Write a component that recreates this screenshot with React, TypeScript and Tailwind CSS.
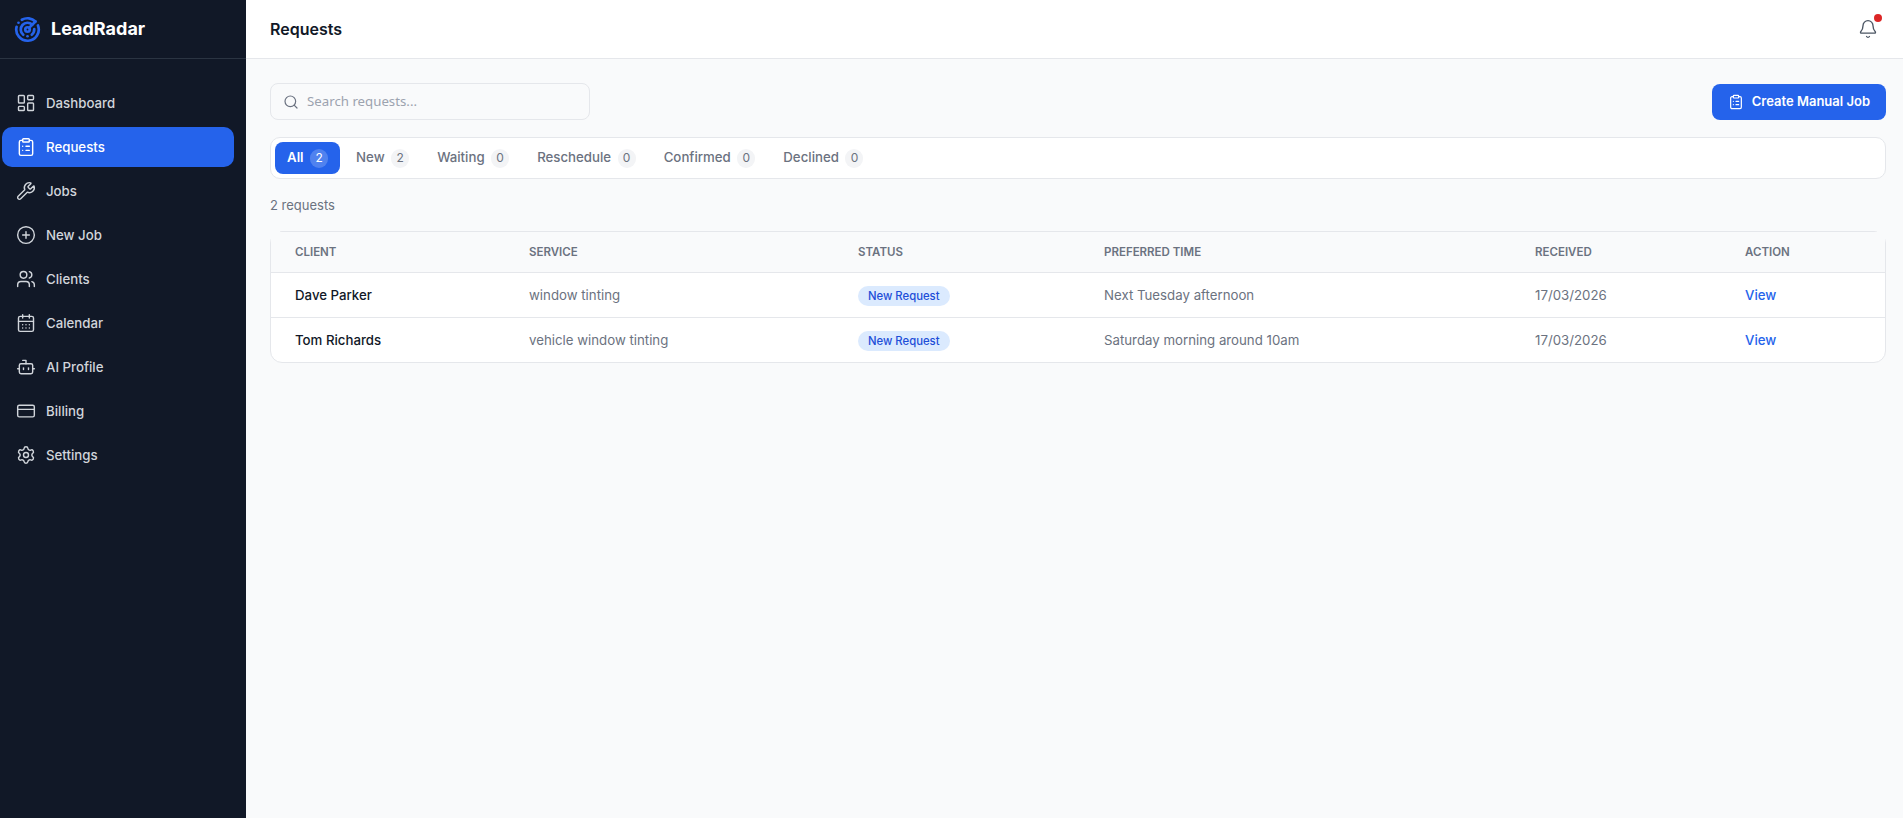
import { Bell, Bot, CalendarDays, CirclePlus, ClipboardList, CreditCard, LayoutDashboard, Radar, Search, Settings, Users, Wrench } from 'lucide-react';

const NAV = [
  { label: 'Dashboard', icon: LayoutDashboard },
  { label: 'Requests', icon: ClipboardList, active: true },
  { label: 'Jobs', icon: Wrench },
  { label: 'New Job', icon: CirclePlus },
  { label: 'Clients', icon: Users },
  { label: 'Calendar', icon: CalendarDays },
  { label: 'AI Profile', icon: Bot },
  { label: 'Billing', icon: CreditCard },
  { label: 'Settings', icon: Settings },
];

const TABS = [
  { label: 'All', count: 2, active: true },
  { label: 'New', count: 2 },
  { label: 'Waiting', count: 0 },
  { label: 'Reschedule', count: 0 },
  { label: 'Confirmed', count: 0 },
  { label: 'Declined', count: 0 },
];

const ROWS = [
  { client: 'Dave Parker', service: 'window tinting', time: 'Next Tuesday afternoon', received: '17/03/2026' },
  { client: 'Tom Richards', service: 'vehicle window tinting', time: 'Saturday morning around 10am', received: '17/03/2026' },
];

export default function App() {
  return (
    <div className="flex min-h-screen bg-[#f9fafb] font-['Inter',sans-serif] text-[#111827]">
      <aside className="w-[246px] shrink-0 bg-[#111827]">
        <div className="flex h-[59px] items-center gap-[10px] border-b border-[#2b3442] pl-[14px]">
          <Radar className="h-[27px] w-[27px] text-[#2563eb]" strokeWidth={2.4} />
          <span className="text-[18px] font-bold leading-none text-white">LeadRadar</span>
        </div>
        <nav className="flex flex-col gap-1 pb-6 pl-[2px] pr-3 pt-6">
          {NAV.map((item) => (
            <a
              key={item.label}
              href="#"
              className={`flex h-10 items-center gap-[10px] rounded-[10px] pl-[14px] text-[13.25px] font-medium leading-5 ${item.active ? 'bg-[#2563eb] text-white' : 'text-[#d1d5db]'}`}
            >
              <item.icon className="h-5 w-5 shrink-0" strokeWidth={1.7} />
              {item.label}
            </a>
          ))}
        </nav>
      </aside>

      <div className="min-w-0 flex-1">
        <header className="flex h-[59px] items-center justify-between border-b border-[#e5e7eb] bg-white pl-6 pr-[25px]">
          <h1 className="text-[16px] font-semibold">Requests</h1>
          <div className="relative">
            <Bell className="h-5 w-5 text-[#4b5563]" strokeWidth={1.6} />
            <span className="absolute -right-1 -top-[5px] h-2 w-2 rounded-full bg-[#dc2626]" />
          </div>
        </header>

        <main className="pb-6 pl-6 pr-[17px] pt-6">
          <div className="flex items-center justify-between">
            <label className="flex h-[37px] w-80 items-center gap-2 rounded-lg border border-[#e5e7eb] pl-[12px] font-['Noto_Sans',sans-serif] text-[13.25px] text-[#9ca3af]">
              <Search className="h-4 w-4 text-[#6b7280]" strokeWidth={1.8} />
              <span>Search requests...</span>
            </label>
            <button className="flex h-9 items-center gap-2 rounded-lg bg-[#2563eb] px-4 text-[13px] font-semibold text-white">
              <ClipboardList className="h-4 w-4" strokeWidth={1.8} />
              Create Manual Job
            </button>
          </div>

          <div className="mt-[17px] flex gap-1 rounded-[10px] border border-[#e5e7eb] bg-white p-1">
            {TABS.map((tab) => (
              <button
                key={tab.label}
                className={`flex h-8 items-center gap-[6.5px] rounded-lg px-3 text-[13.25px] font-medium ${tab.active ? 'bg-[#2563eb] font-semibold text-white' : 'text-[#6b7280]'}`}
              >
                {tab.label}
                <span className={`flex h-[19px] w-[18px] items-center justify-center rounded-full text-[12px] font-normal ${tab.active ? 'bg-white/20 text-white' : 'bg-[#f3f4f6] text-[#6b7280]'}`}>
                  {tab.count}
                </span>
              </button>
            ))}
          </div>

          <p className="mt-[17px] text-[13px] leading-[18px] text-[#6b7280]">2 requests</p>

          <div className="relative mt-[17px] rounded-xl border border-[#e5e7eb] bg-white">
            <span className="absolute -left-px -top-px h-2 w-[10px] bg-[#f9fafb]" />
            <span className="absolute -right-px -top-px h-2 w-[9px] bg-[#f9fafb]" />
            <table className="w-full table-fixed border-collapse text-left text-[13.25px] leading-5">
              <colgroup>
                <col className="w-[258px]" />
                <col className="w-[329px]" />
                <col className="w-[246px]" />
                <col className="w-[431px]" />
                <col className="w-[210px]" />
                <col />
              </colgroup>
              <thead>
                <tr className="h-[40px] border-b border-[#e5e7eb] bg-[#f9fafb] text-[11.5px] uppercase text-[#6b7280]">
                  <th className="pl-[24px] font-semibold">Client</th>
                  <th className="font-semibold">Service</th>
                  <th className="font-semibold">Status</th>
                  <th className="font-semibold">Preferred Time</th>
                  <th className="font-semibold">Received</th>
                  <th className="font-semibold">Action</th>
                </tr>
              </thead>
              <tbody>
                {ROWS.map((row, i) => (
                  <tr key={row.client} className={`h-[45px] ${i === 0 ? 'border-b border-[#e5e7eb]' : ''}`}>
                    <td className="pl-[24px] pt-px font-medium text-[#111827]">{row.client}</td>
                    <td className="pt-px text-[#6b7280]">{row.service}</td>
                    <td className="pt-px">
                      <span className="inline-flex h-5 items-center rounded-full bg-[#dbeafe] px-[10px] text-[11.3px] font-medium text-[#1d4ed8]">New Request</span>
                    </td>
                    <td className="pt-px text-[#6b7280]">{row.time}</td>
                    <td className="pt-px text-[#6b7280]">{row.received}</td>
                    <td className="pt-px"><a href="#" className="font-medium text-[#2563eb]">View</a></td>
                  </tr>
                ))}
              </tbody>
            </table>
          </div>
        </main>
      </div>
    </div>
  );
}
